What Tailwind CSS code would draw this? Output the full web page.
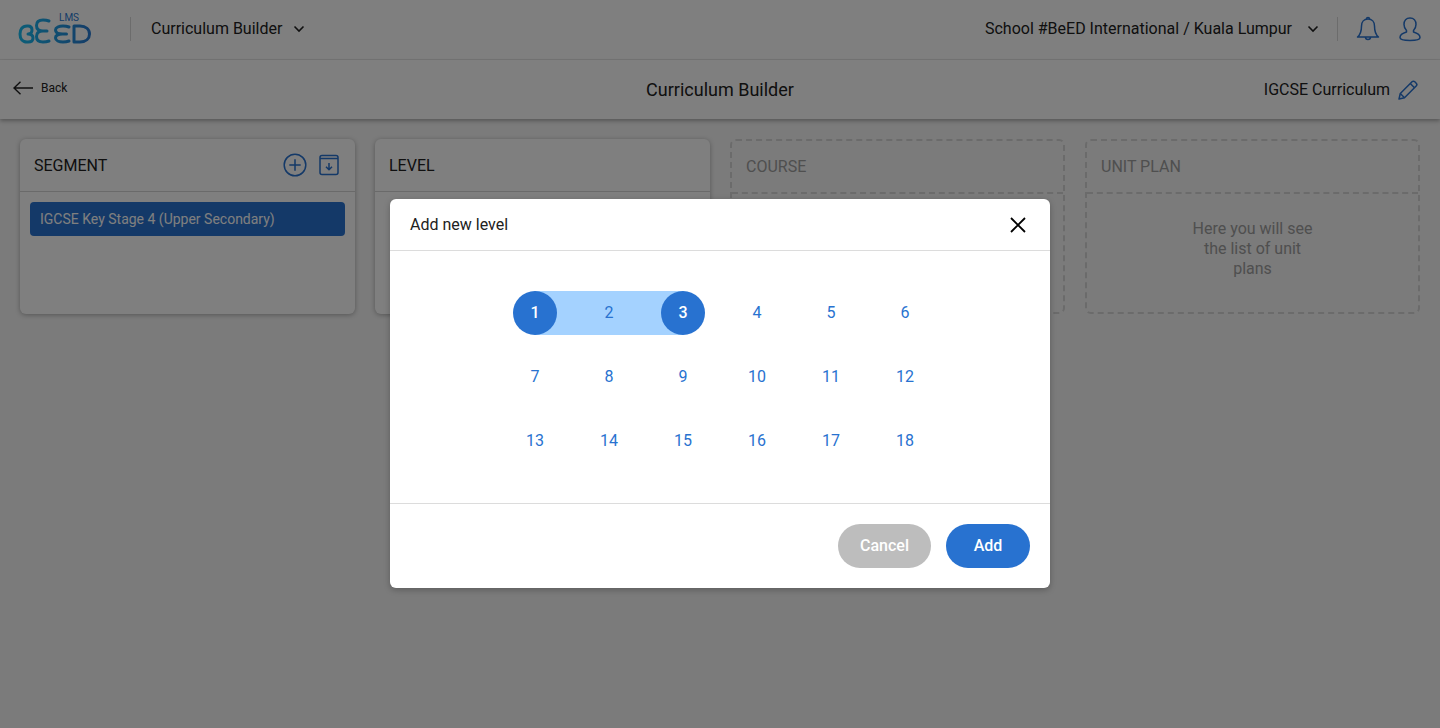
<!doctype html>
<html lang="en">
<head>
<meta charset="utf-8">
<title>Curriculum Builder</title>
<script src="https://cdn.jsdelivr.net/npm/@tailwindcss/browser@4"></script>
</head>
<body class="font-['Roboto',sans-serif]">
<div class="relative h-[728px] w-[1440px] overflow-hidden bg-[#f6f6f6]">

  <!-- top bar -->
  <header class="flex h-[60px] items-center border-b border-[#ececec] bg-white pb-[2px] pl-[17px] pr-[19px]">
    <div class="relative h-[34px] w-[76px]">
      <svg width="76" height="34" viewBox="0 0 76 34" fill="none" stroke="url(#logo-fill)" stroke-width="3" stroke-linecap="round" stroke-linejoin="round" class="absolute left-0 top-0">
        <defs>
          <linearGradient id="logo-fill" gradientUnits="userSpaceOnUse" x1="0" y1="0" x2="76" y2="0">
            <stop offset="0" stop-color="#17bdf0"/>
            <stop offset="1" stop-color="#2a78d0"/>
          </linearGradient>
        </defs>
        <path d="M10 14C5 14 3 18 3 22s2 8 7 8h1c3 0 5-1.500 5-4s-2-4-5-4c3 0 4-1.500 4-4s-1.500-4-4-4h-1z"/>
        <path d="M32 9c-2-.8-4-1-6-1-4 0-6.500 2-6.500 5.500S22 19 26 19h4M26 19c-4 0-6.500 2-6.500 5.500S22 30 26 30c2 0 4-.2 6-1"/>
        <path d="M52 15c-2-.8-4-1-6-1-4 0-7.500 1.500-7.500 4s3 4 7 4h4M45.500 22c-4 0-7 1.500-7 4s3.500 4 7.500 4c2 0 4-.2 6-1"/>
        <path d="M57 14h6c6 0 9.500 3.500 9.500 8s-3.500 8-9.500 8h-6z"/>
      </svg>
      <span class="absolute left-[42px] top-0 text-[10px] leading-[12px] text-[#2a78d0]">LMS</span>
    </div>
    <div class="ml-[37px] h-6 w-px bg-[#d9d9d9]"></div>
    <span class="ml-5 text-[16px] text-[#212121]">Curriculum Builder</span>
    <svg class="ml-[11px]" width="12" height="8" viewBox="0 0 12 8" fill="none" stroke="#212121" stroke-width="1.600"><path d="M1.500 1.500 6 6l4.500-4.500"/></svg>
    <span class="ml-auto text-[16px] text-[#212121]">School #BeED International / Kuala Lumpur</span>
    <svg class="ml-[15px]" width="12" height="8" viewBox="0 0 12 8" fill="none" stroke="#212121" stroke-width="1.600"><path d="M1.500 1.500 6 6l4.500-4.500"/></svg>
    <div class="ml-[18px] h-6 w-px bg-[#d9d9d9]"></div>
    <svg class="ml-[18px]" width="24" height="26" viewBox="0 0 24 26" fill="none" stroke="#2872d0" stroke-width="1.500" stroke-linejoin="round"><path d="M12 3c-4 0-6.500 3-6.500 7 0 5-1.500 9-4 11h21c-2.500-2-4-6-4-11 0-4-2.500-7-6.500-7z"/><path d="M10.500 3a1.500 1.500 0 0 1 3 0"/><path d="M9.500 21a2.500 2.500 0 0 0 5 0"/></svg>
    <svg class="ml-[19px]" width="22" height="26" viewBox="0 0 22 26" fill="none" stroke="#2872d0" stroke-width="1.500" stroke-linejoin="round"><path d="M11 2C7.200 2 5 4.800 5 8.500c0 2.500 1 4.500 2.500 6V16C4 17 1 18.500 1 21.500c0 1.700 3 3 10 3s10-1.300 10-3c0-3-3-4.500-6.500-5.500v-1.500C16 13 17 11 17 8.500 17 4.800 14.800 2 11 2z"/></svg>
  </header>

  <!-- sub header -->
  <div class="relative z-10 grid h-[59px] grid-cols-3 items-center bg-white px-[22px] shadow-[0_2px_4px_rgba(0,0,0,0.3)]">
    <div class="-ml-[9px] flex items-center pb-[3px]">
      <svg width="20" height="14" viewBox="0 0 20 14" fill="none" stroke="#212121" stroke-width="1.400"><path d="M20 7H1M7.500 .8 1 7l6.500 6.200"/></svg>
      <span class="ml-2 text-[12px] text-[#212121]">Back</span>
    </div>
    <h1 class="text-center text-[18px] text-[#212121]">Curriculum Builder</h1>
    <div class="flex items-center justify-end">
      <span class="text-[16px] text-[#212121]">IGCSE Curriculum</span>
      <svg class="ml-2" width="20" height="20" viewBox="0 0 20 20" fill="none" stroke="#2872d0" stroke-width="1.500" stroke-linejoin="round"><path d="M1 19l1.300-5.500L14 1.800c.8-.8 2-.8 2.800 0l1.400 1.400c.8.8.8 2 0 2.800L6.500 17.700 1 19z"/><path d="M12.300 3.500l4.200 4.200M2.300 13.500l4.200 4.200"/></svg>
    </div>
  </div>

  <!-- columns -->
  <main class="flex gap-5 px-5 pt-5">
    <section class="h-[175px] w-[335px] rounded-md bg-white shadow-[0_1px_5px_rgba(0,0,0,0.3)]">
      <div class="flex h-[53px] items-center border-b border-[#d4d4d4] pl-[14px] pr-4">
        <h2 class="pt-[2px] text-[16px] text-[#212121]">SEGMENT</h2>
        <svg class="ml-auto" width="24" height="24" viewBox="0 0 24 24" fill="none" stroke="#2872d0" stroke-width="1.500"><circle cx="12" cy="12" r="10.800"/><path d="M12 6.300v11.400M6.300 12h11.400"/></svg>
        <svg class="ml-3" width="20" height="22" viewBox="0 0 20 22" fill="none" stroke="#2872d0" stroke-width="1.500" stroke-linejoin="round"><rect x="1" y="1.500" width="18" height="19" rx="2"/><path d="M1 4.500h18M10 9v6.500M7 12.800l3 3 3-3"/></svg>
      </div>
      <div class="p-[10px]">
        <div class="flex h-[34px] items-center rounded bg-[#2872d0] px-[10px] text-[14px] text-white">IGCSE Key Stage 4 (Upper Secondary)</div>
      </div>
    </section>
    <section class="h-[175px] w-[335px] rounded-md bg-white shadow-[0_1px_5px_rgba(0,0,0,0.3)]">
      <div class="flex h-[53px] items-center border-b border-[#d4d4d4] pl-[14px]">
        <h2 class="pt-[2px] text-[16px] text-[#212121]">LEVEL</h2>
      </div>
    </section>
    <section class="h-[175px] w-[335px] rounded-md border-2 border-dashed border-[#d6d6d6]">
      <div class="flex h-[53px] items-center border-b-2 border-dashed border-[#d6d6d6] pl-[14px]">
        <h2 class="text-[16px] text-[#9e9e9e]">COURSE</h2>
      </div>
    </section>
    <section class="h-[175px] w-[335px] rounded-md border-2 border-dashed border-[#d6d6d6]">
      <div class="flex h-[53px] items-center border-b-2 border-dashed border-[#d6d6d6] pl-[14px]">
        <h2 class="text-[16px] text-[#9e9e9e]">UNIT PLAN</h2>
      </div>
      <p class="mx-auto mt-[25px] w-[130px] text-center text-[16px] leading-[20px] text-[#9e9e9e]">Here you will see the list of unit plans</p>
    </section>
  </main>

  <!-- dialog -->
  <div class="absolute inset-0 z-20 bg-black/50">
    <div class="absolute left-[390px] top-[199px] w-[660px] rounded-md bg-white shadow-[0_2px_6px_rgba(0,0,0,0.25)]">
      <div class="flex h-[52px] items-center justify-between border-b border-[#dcdcdc] pl-5 pr-[23px]">
        <h3 class="text-[16px] text-[#212121]">Add new level</h3>
        <svg width="18" height="18" viewBox="0 0 18 18" fill="none" stroke="#000" stroke-width="1.800"><path d="M2 2l14 14M16 2 2 16"/></svg>
      </div>
      <div class="flex h-[253px] justify-center border-b border-[#dcdcdc] pt-10">
        <div class="grid h-[172px] w-[414px] grid-cols-6 gap-x-[30px] gap-y-5 text-[16px] text-[#2872d0]">
          <div class="relative z-10 flex size-11 items-center justify-center rounded-full bg-[#2872d0] font-medium text-white">1</div>
          <div class="-mx-[52px] flex h-11 items-center justify-center bg-[#a4d2ff]">2</div>
          <div class="relative z-10 flex size-11 items-center justify-center rounded-full bg-[#2872d0] font-medium text-white">3</div>
          <div class="flex size-11 items-center justify-center">4</div>
          <div class="flex size-11 items-center justify-center">5</div>
          <div class="flex size-11 items-center justify-center">6</div>
          <div class="flex size-11 items-center justify-center">7</div>
          <div class="flex size-11 items-center justify-center">8</div>
          <div class="flex size-11 items-center justify-center">9</div>
          <div class="flex size-11 items-center justify-center">10</div>
          <div class="flex size-11 items-center justify-center">11</div>
          <div class="flex size-11 items-center justify-center">12</div>
          <div class="flex size-11 items-center justify-center">13</div>
          <div class="flex size-11 items-center justify-center">14</div>
          <div class="flex size-11 items-center justify-center">15</div>
          <div class="flex size-11 items-center justify-center">16</div>
          <div class="flex size-11 items-center justify-center">17</div>
          <div class="flex size-11 items-center justify-center">18</div>
        </div>
      </div>
      <div class="flex h-[84px] items-center justify-end gap-[15px] px-5">
        <button class="h-11 w-[93px] rounded-full bg-[#bdbdbd] text-[16px] font-medium text-white">Cancel</button>
        <button class="h-11 w-[84px] rounded-full bg-[#2872d0] text-[16px] font-medium text-white">Add</button>
      </div>
    </div>
  </div>
</div>
</body>
</html>
